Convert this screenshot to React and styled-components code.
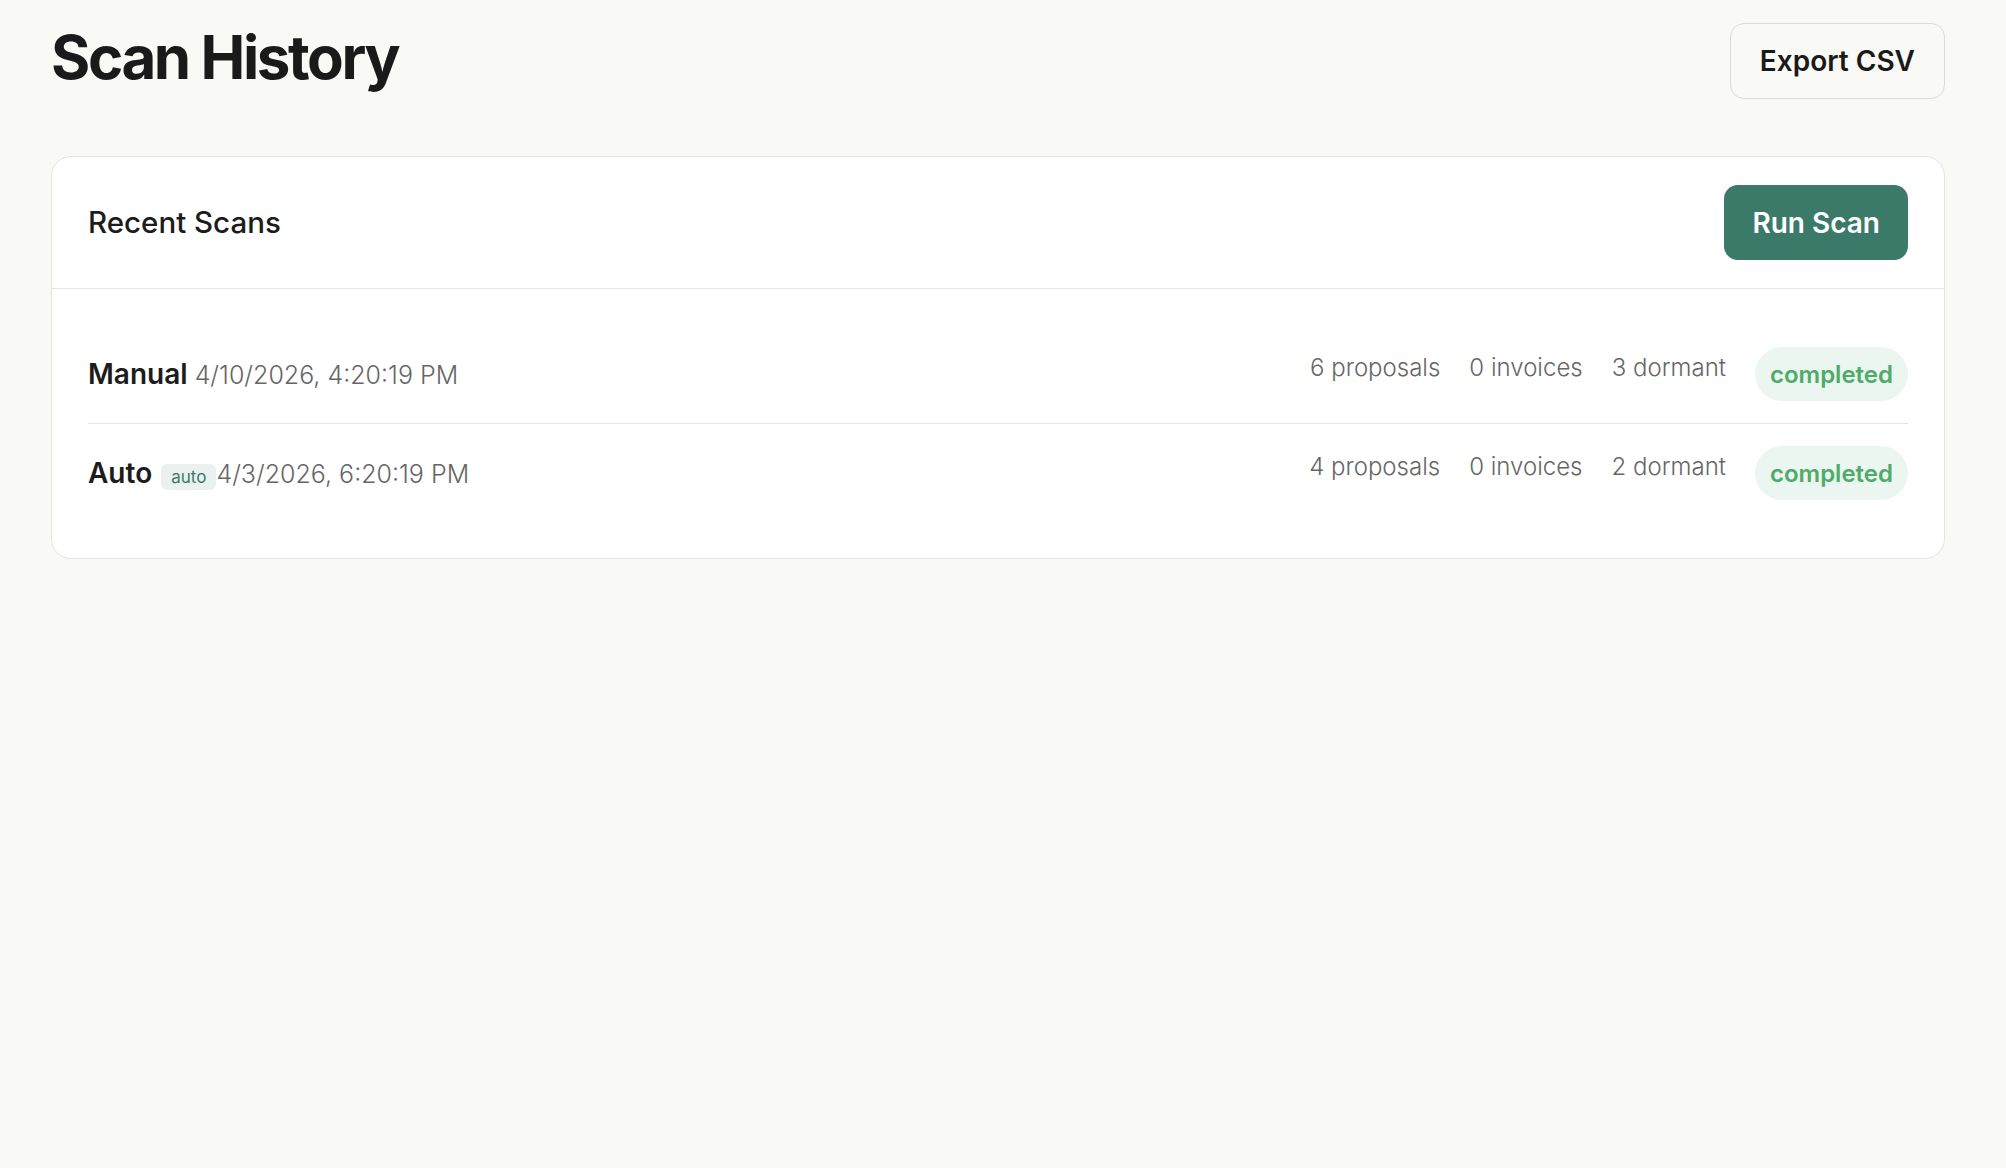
import React from 'react';
import styled, { createGlobalStyle } from 'styled-components';

const GlobalStyle = createGlobalStyle`
  html, body {
    margin: 0;
    padding: 0;
    background: #f9f9f6;
  }
  body {
    font-family: "Inter", "Noto Sans", sans-serif;
    color: #1c1c1c;
  }
`;

const Page = styled.main`
  min-height: 100vh;
  box-sizing: border-box;
  padding: 23px 61px 40px 51px;
`;

const TopBar = styled.header`
  display: flex;
  align-items: center;
  justify-content: space-between;
  margin-bottom: 57px;
`;

const Title = styled.h1`
  margin: -8px 0 0;
  font-size: 60px;
  font-weight: 700;
  letter-spacing: -0.04em;
  line-height: 1;
  color: #1a1a1a;
`;

const OutlineButton = styled.button`
  height: 76px;
  padding: 0 29px;
  border: 1px solid #dcdcd6;
  border-radius: 14px;
  background: #f9f9f6;
  font-family: inherit;
  font-size: 28px;
  font-weight: 600;
  color: #1a1a1a;
  cursor: pointer;
`;

const Card = styled.section`
  background: #fff;
  border: 1px solid #e4e4df;
  border-radius: 20px;
`;

const CardHeader = styled.div`
  display: flex;
  align-items: center;
  justify-content: space-between;
  padding: 28px 36px;
  border-bottom: 1px solid #e4e4df;
`;

const CardTitle = styled.h2`
  margin: 0 0 2px;
  font-size: 29.5px;
  font-weight: 500;
  color: #1c1c1c;
`;

const PrimaryButton = styled.button`
  height: 75px;
  padding: 0 28px;
  border: none;
  border-radius: 14px;
  background: #3b7a69;
  color: #fff;
  font-family: inherit;
  font-size: 28px;
  font-weight: 600;
  cursor: pointer;
`;

const List = styled.div`
  padding: 36px;
`;

const Row = styled.div`
  display: flex;
  align-items: center;
  justify-content: space-between;
  padding: 22px 0;

  & + & {
    border-top: 1px solid #e4e4df;
  }
`;

const RowMain = styled.div`
  font-size: 25px;
  line-height: 1.6;
`;

const Trigger = styled.strong`
  font-size: 28px;
  font-weight: 600;
  color: #1c1c1c;
`;

const AutoBadge = styled.span`
  display: inline-block;
  margin-left: 2px;
  padding: 2px 10px;
  border-radius: 6px;
  background: #eaf1ee;
  color: #3b7a69;
  font-size: 17px;
  font-weight: 400;
  line-height: 1.3;
`;

const When = styled.span`
  font-weight: 300;
  color: #666;
`;

const RowSide = styled.div`
  display: flex;
  gap: 29px;
`;

const Stat = styled.span`
  font-size: 24px;
  font-weight: 300;
  line-height: 1.75;
  color: #666;
`;

const StatusPill = styled.span`
  display: flex;
  align-items: center;
  height: 54px;
  padding: 0 15px;
  border-radius: 27px;
  background: ${(p) => (p.status === 'completed' ? '#eaf6ef' : '#f3f3f0')};
  color: ${(p) => (p.status === 'completed' ? '#4fab69' : '#777')};
  font-size: 24px;
  font-weight: 600;
`;

const scans = [
  { id: 1, trigger: 'Manual', auto: false, when: '4/10/2026, 4:20:19 PM', proposals: 6, invoices: 0, dormant: 3, status: 'completed' },
  { id: 2, trigger: 'Auto', auto: true, when: '4/3/2026, 6:20:19 PM', proposals: 4, invoices: 0, dormant: 2, status: 'completed' },
];

const App = () => (
  <>
    <GlobalStyle />
    <Page>
      <TopBar>
        <Title>Scan History</Title>
        <OutlineButton>Export CSV</OutlineButton>
      </TopBar>

      <Card>
        <CardHeader>
          <CardTitle>Recent Scans</CardTitle>
          <PrimaryButton>Run Scan</PrimaryButton>
        </CardHeader>
        <List>
          {scans.map((scan) => (
            <Row key={scan.id}>
              <RowMain>
                <Trigger>{scan.trigger}</Trigger>{' '}
                {scan.auto && <AutoBadge>auto</AutoBadge>}
                <When>{scan.when}</When>
              </RowMain>
              <RowSide>
                <Stat>{scan.proposals} proposals</Stat>
                <Stat>{scan.invoices} invoices</Stat>
                <Stat>{scan.dormant} dormant</Stat>
                <StatusPill status={scan.status}>{scan.status}</StatusPill>
              </RowSide>
            </Row>
          ))}
        </List>
      </Card>
    </Page>
  </>
);

export default App;
